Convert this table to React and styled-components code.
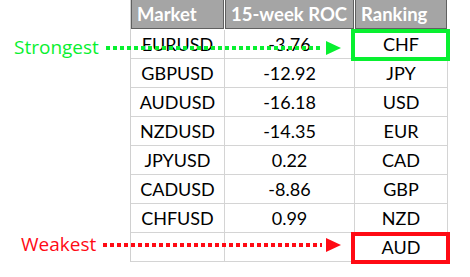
import React from 'react';
import styled, { createGlobalStyle } from 'styled-components';

const GREEN = '#08f030';
const RED = '#ff0a14';

const markets = [
  { market: 'EURUSD', roc: '-3.76', rank: 'CHF' },
  { market: 'GBPUSD', roc: '-12.92', rank: 'JPY' },
  { market: 'AUDUSD', roc: '-16.18', rank: 'USD' },
  { market: 'NZDUSD', roc: '-14.35', rank: 'EUR' },
  { market: 'JPYUSD', roc: '0.22', rank: 'CAD' },
  { market: 'CADUSD', roc: '-8.86', rank: 'GBP' },
  { market: 'CHFUSD', roc: '0.99', rank: 'NZD' },
  { market: '', roc: '', rank: 'AUD' },
];

const Global = createGlobalStyle`
  html, body {
    margin: 0;
    padding: 0;
    background: #ffffff;
  }
  body {
    font-family: 'Lato', 'Liberation Sans', sans-serif;
  }
`;

const Page = styled.div`
  position: relative;
  width: 470px;
  height: 277px;
  display: flex;
  padding-left: 130px;
  box-sizing: border-box;
  overflow: hidden;
`;

const Table = styled.div`
  display: grid;
  grid-template-columns: 94px 130px 93px;
  grid-template-rows: 30px repeat(8, 29px);
  align-self: flex-start;
  border-left: 1px solid #d0d0d0;
`;

const HeadCell = styled.div`
  display: flex;
  align-items: center;
  padding: 0 0 1px 5px;
  margin: 0 1px 1px 0;
  background: #a5a5a5;
  border: 1px solid #606060;
  border-top: none;
  color: #ffffff;
  font-weight: bold;
  font-size: 18.5px;
  white-space: nowrap;
  overflow: hidden;
`;

const Cell = styled.div`
  position: relative;
  display: flex;
  align-items: center;
  justify-content: center;
  border-right: 1px solid #d4d4d4;
  border-bottom: 1px solid #d4d4d4;
  color: #000000;
  font-size: 18px;
  padding-bottom: 1px;

  ${(p) =>
    p.$mark &&
    `
    &::after {
      content: '';
      position: absolute;
      left: -4px;
      right: -3px;
      top: -1px;
      bottom: -3px;
      border: 4px solid ${p.$mark};
      z-index: 2;
    }
  `}
`;

const Annotation = styled.div`
  position: absolute;
  left: ${(p) => p.$left}px;
  top: ${(p) => p.$top}px;
  width: ${(p) => 341 - p.$left}px;
  display: flex;
  align-items: center;
  gap: 7px;
  color: ${(p) => p.$color};
  font-family: 'Open Sans', 'Liberation Sans', sans-serif;
  font-size: 19px;
  z-index: 3;
`;

const Label = styled.span`
  line-height: 22px;
`;

const Dots = styled.div`
  flex: 1;
  height: 4px;
  margin-top: 1px;
  background: repeating-linear-gradient(
    to right,
    ${(p) => p.$color} 0 4px,
    transparent 4px 7px
  );
`;

const Arrow = ({ color }) => (
  <svg width="15" height="14" viewBox="0 0 15 14" style={{ marginLeft: -3, marginTop: 1 }}>
    <polygon points="0,0 15,7 0,14" fill={color} />
  </svg>
);

export default function App() {
  return (
    <>
      <Global />
      <Page>
        <Table>
          <HeadCell>Market</HeadCell>
          <HeadCell>15-week ROC</HeadCell>
          <HeadCell>Ranking</HeadCell>
          {markets.map((row, i) => (
            <React.Fragment key={i}>
              <Cell>{row.market}</Cell>
              <Cell>{row.roc}</Cell>
              <Cell $mark={i === 0 ? GREEN : i === 7 ? RED : null}>{row.rank}</Cell>
            </React.Fragment>
          ))}
        </Table>
        <Annotation $left={14} $top={36} $color={GREEN}>
          <Label>Strongest</Label>
          <Dots $color={GREEN} />
          <Arrow color={GREEN} />
        </Annotation>
        <Annotation $left={21} $top={233} $color={RED}>
          <Label>Weakest</Label>
          <Dots $color={RED} />
          <Arrow color={RED} />
        </Annotation>
      </Page>
    </>
  );
}
